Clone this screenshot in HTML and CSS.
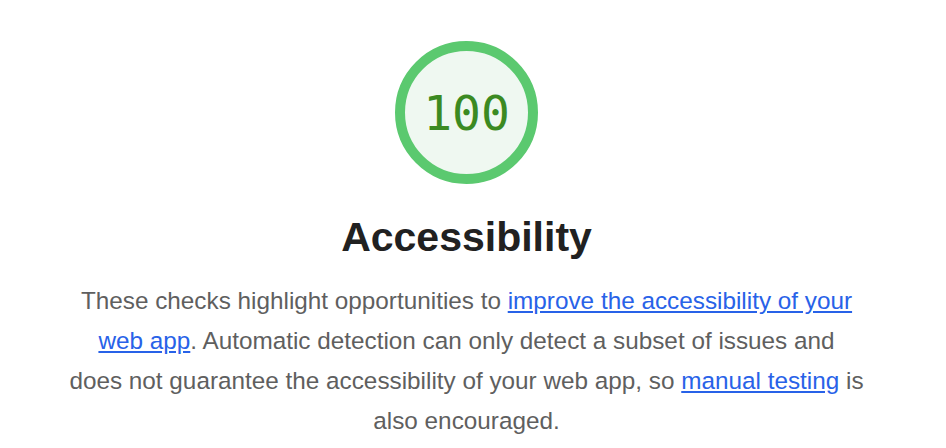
FILE: index.html
```html
<!DOCTYPE html>
<html>
<head>
<meta charset="utf-8">
<link rel="stylesheet" href="styles.css">
</head>
<body>
<div class="category">
  <div class="gauge">
    <span class="score">100</span>
  </div>
  <h1 class="title">Accessibility</h1>
  <p class="desc">These checks highlight opportunities to <a href="#">improve the accessibility of your web app</a>. Automatic detection can only detect a subset of issues and<br>does not guarantee the accessibility of your web app, so <a href="#">manual testing</a> is also encouraged.</p>
</div>
</body>
</html>
```
FILE: styles.css
```css
html, body {
  margin: 0;
  padding: 0;
  background: #ffffff;
}
.category {
  display: flex;
  flex-direction: column;
  align-items: center;
  padding-top: 41px;
  padding-right: 13px;
}
.gauge {
  box-sizing: border-box;
  width: 143px;
  height: 143px;
  border-radius: 50%;
  border: 10px solid #5bc96f;
  background: #eff8f1;
  display: flex;
  align-items: center;
  justify-content: center;
}
.score {
  font-family: "DejaVu Sans Mono", monospace;
  font-size: 48px;
  color: #3b8a22;
  line-height: 1;
}
.title {
  margin: 29px 0 0;
  font-family: "Liberation Sans", Arial, sans-serif;
  font-weight: bold;
  font-size: 41px;
  line-height: 48px;
  color: #212121;
}
.desc {
  margin: 20px 0 0;
  width: 802px;
  text-align: center;
  font-family: "Liberation Sans", Arial, sans-serif;
  font-size: 24.3px;
  line-height: 40px;
  color: #5f5f5f;
}
.desc a {
  color: #2862e8;
  text-decoration: underline;
}
```
